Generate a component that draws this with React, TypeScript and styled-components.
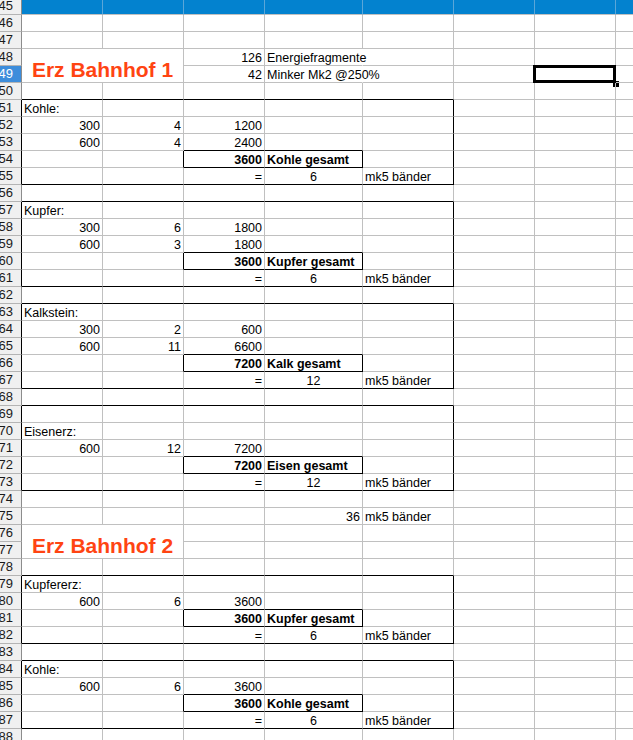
import React from "react";
import styled, { createGlobalStyle } from "styled-components";

const GlobalStyle = createGlobalStyle`
  html, body {
    margin: 0;
    padding: 0;
    background: #fff;
    overflow: hidden;
  }
  body {
    font-family: "Liberation Sans", Arial, sans-serif;
  }
`;

const COL_WIDTHS = [81, 81, 81, 98, 91, 81, 81, 81];
const FIRST_ROW = 45;
const LAST_ROW = 88;
const GRID_LINE = "#c0c0c0";
const INK = "#000";
const BAND = "#0382cf";

type Align = "l" | "r" | "c";
type CellDef = { t: string; a: Align; b?: boolean; spill?: boolean };
type Box = { r1: number; r2: number; c1: number; c2: number };

const L = (t: string, b = false, spill = false): CellDef => ({ t, a: "l", b, spill });
const R = (t: string, b = false): CellDef => ({ t, a: "r", b });
const C = (t: string): CellDef => ({ t, a: "c" });

const rows: Record<number, (CellDef | null)[]> = {};
const boxes: Box[] = [];

// one block of a material: label, inputs, total row, result row
const block = (
  start: number,
  label: string,
  inputs: [string, string, string][],
  total: string,
  totalLabel: string,
  bands: string,
  top = start
) => {
  rows[start] = [L(label)];
  inputs.forEach((inp, i) => {
    rows[start + 1 + i] = [R(inp[0]), R(inp[1]), R(inp[2])];
  });
  const t = start + 1 + inputs.length;
  rows[t] = [null, null, R(total, true), L(totalLabel, true)];
  rows[t + 1] = [null, null, R("="), C(bands), L("mk5 bänder")];
  boxes.push({ r1: top, r2: t + 1, c1: 0, c2: 4 });
  boxes.push({ r1: t, r2: t, c1: 2, c2: 3 });
};

rows[48] = [null, null, R("126"), L("Energiefragmente", false, true)];
rows[49] = [null, null, R("42"), L("Minker Mk2 @250%", false, true)];

block(51, "Kohle:", [["300", "4", "1200"], ["600", "4", "2400"]], "3600", "Kohle gesamt", "6");
block(57, "Kupfer:", [["300", "6", "1800"], ["600", "3", "1800"]], "3600", "Kupfer gesamt", "6");
block(63, "Kalkstein:", [["300", "2", "600"], ["600", "11", "6600"]], "7200", "Kalk gesamt", "12");
block(70, "Eisenerz:", [["600", "12", "7200"]], "7200", "Eisen gesamt", "12", 69);

rows[75] = [null, null, null, R("36"), L("mk5 bänder")];

block(79, "Kupfererz:", [["600", "6", "3600"]], "3600", "Kupfer gesamt", "6");
block(84, "Kohle:", [["600", "6", "3600"]], "3600", "Kohle gesamt", "6");

const banners: Record<number, string> = { 48: "Erz Bahnhof 1", 76: "Erz Bahnhof 2" };
const ACTIVE_ROW = 49;
const ACTIVE_COL = 6;

const rightInk = (r: number, c: number) =>
  boxes.some((b) => r >= b.r1 && r <= b.r2 && (c === b.c2 || c === b.c1 - 1));
const bottomInk = (r: number, c: number) =>
  boxes.some((b) => c >= b.c1 && c <= b.c2 && (r === b.r2 || r === b.r1 - 1));

const Sheet = styled.div`
  display: grid;
  grid-template-columns: 22px ${COL_WIDTHS.map((w) => `${w}px`).join(" ")};
  grid-auto-rows: 17px;
  width: 633px;
  height: 742px;
  margin-top: -2px;
  overflow: hidden;
  background: #fff;
  font-size: 12.5px;
  color: #000;
`;

const RowHead = styled.div<{ $active: boolean; $edge: boolean }>`
  display: flex;
  align-items: center;
  justify-content: flex-end;
  box-sizing: border-box;
  padding-right: 8px;
  overflow: hidden;
  background: ${(p) => (p.$active ? "#3d8ddb" : "#f0f0f0")};
  color: ${(p) => (p.$active ? "#fff" : "#1a1a1a")};
  border-bottom: 1px solid #b4b4b4;
  border-right: 1px solid ${(p) => (p.$edge ? INK : "#8c8c8c")};
  font-size: 13px;
  line-height: 16px;
`;

const justify: Record<Align, string> = { l: "flex-start", r: "flex-end", c: "center" };

const Cell = styled.div<{ $align: Align; $bold: boolean; $right: string; $bottom: string; $fill: string }>`
  position: relative;
  display: flex;
  align-items: flex-end;
  justify-content: ${(p) => justify[p.$align]};
  box-sizing: border-box;
  padding: 0 2px;
  border-right: 1px solid ${(p) => p.$right};
  border-bottom: 1px solid ${(p) => p.$bottom};
  background: ${(p) => p.$fill};
  font-weight: ${(p) => (p.$bold ? 700 : 400)};
  line-height: 14px;
  white-space: nowrap;
`;

const Banner = styled.div`
  grid-column: span 2;
  grid-row: span 2;
  display: flex;
  align-items: flex-end;
  justify-content: center;
  box-sizing: border-box;
  border-right: 1px solid ${GRID_LINE};
  border-bottom: 1px solid ${GRID_LINE};
  color: #ff4412;
  font-size: 21px;
  font-weight: 700;
  line-height: 24px;
  white-space: nowrap;
`;

const CellCursor = styled.div`
  position: absolute;
  left: -2px;
  top: -1px;
  right: -1px;
  bottom: -1px;
  border: 3px solid #000;
  pointer-events: none;

  &::after {
    content: "";
    position: absolute;
    right: -6px;
    bottom: -7px;
    width: 6px;
    height: 6px;
    background: #000;
  }
`;

const App = () => {
  const cells: React.ReactNode[] = [];

  for (let r = FIRST_ROW; r <= LAST_ROW; r++) {
    cells.push(
      <RowHead key={`h${r}`} $active={r === ACTIVE_ROW} $edge={rightInk(r, -1)}>
        {r}
      </RowHead>
    );
    const data = rows[r] || [];
    const underBanner = banners[r - 1] !== undefined;

    for (let c = 0; c < COL_WIDTHS.length; c++) {
      if (banners[r] !== undefined && c === 0) {
        cells.push(<Banner key={`b${r}`}>{banners[r]}</Banner>);
        continue;
      }
      if ((banners[r] !== undefined || underBanner) && c < 2) continue;

      const def = data[c];
      const band = r === FIRST_ROW;
      const right = def?.spill ? "transparent" : rightInk(r, c) ? INK : band ? "#5aa6d8" : GRID_LINE;
      const bottom = bottomInk(r, c) ? INK : GRID_LINE;

      cells.push(
        <Cell
          key={`${r}-${c}`}
          $align={def?.a ?? "l"}
          $bold={!!def?.b}
          $right={right}
          $bottom={bottom}
          $fill={band ? BAND : "transparent"}
        >
          {def?.t}
          {r === ACTIVE_ROW && c === ACTIVE_COL && <CellCursor />}
        </Cell>
      );
    }
  }

  return (
    <>
      <GlobalStyle />
      <Sheet>{cells}</Sheet>
    </>
  );
};

export default App;
